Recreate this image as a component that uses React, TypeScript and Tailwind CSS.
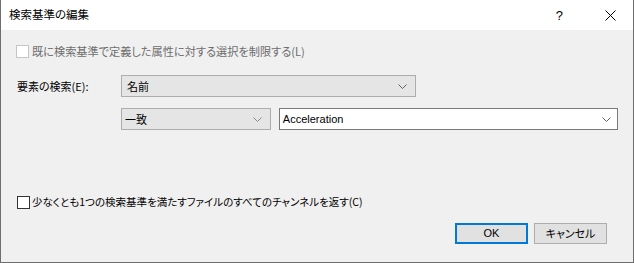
function Chevron({ color = "#606060" }: { color?: string }) {
  return (
    <svg width="9" height="5" viewBox="0 0 9 5" className="shrink-0">
      <polyline points="0.5,0.5 4.5,4.5 8.5,0.5" fill="none" stroke={color} strokeWidth="1" />
    </svg>
  );
}

function Checkbox({ disabled = false }: { disabled?: boolean }) {
  return (
    <div
      className={`h-[13px] w-[13px] shrink-0 border bg-white ${
        disabled ? "border-[#c6c6c6]" : "border-[#333333]"
      }`}
    />
  );
}

export default function App() {
  return (
    <div className="flex h-[263px] w-[634px] flex-col border-x border-b border-[#6e6e6e] bg-[#f0f0f0] font-['Noto_Sans_CJK_JP',sans-serif] text-[11px] text-black [font-feature-settings:'palt']">
      {/* title bar */}
      <div className="flex h-[30px] shrink-0 items-center bg-white pl-[8px]">
        <span className="text-[11.5px] leading-none">検索基準の編集</span>
        <span className="ml-auto mr-[42px] font-['Liberation_Sans',sans-serif] text-[13px] leading-none">?</span>
        <svg width="11" height="11" viewBox="0 0 11 11" className="mr-[17px]">
          <path d="M0.5 0.5 L10.5 10.5 M10.5 0.5 L0.5 10.5" stroke="#000" strokeWidth="1" />
        </svg>
      </div>

      <div className="flex flex-1 flex-col px-[15px]">
        <div className="mt-[15px] flex items-center gap-[3px]">
          <Checkbox disabled />
          <span className="text-[11.2px] leading-none text-[#6d6d6d]">既に検索基準で定義した属性に対する選択を制限する(L)</span>
        </div>

        <div className="mt-[17px] flex items-center">
          <span className="w-[105px] pl-px leading-none">要素の検索(E):</span>
          <div className="flex h-[22px] w-[295px] items-center border border-[#adadad] bg-[#e5e5e5] pl-[5px] pr-[8px]">
            <span className="leading-none">名前</span>
            <span className="ml-auto">
              <Chevron />
            </span>
          </div>
        </div>

        <div className="mt-[11px] flex items-center pl-[105px]">
          <div className="flex h-[22px] w-[151px] items-center border border-[#adadad] bg-[#e5e5e5] pl-[3px] pr-[8px]">
            <span className="leading-none">一致</span>
            <span className="ml-auto">
              <Chevron color="#8a8a8a" />
            </span>
          </div>
          <div className="ml-[8px] flex h-[22px] w-[342px] items-center border border-[#7a7a7a] bg-white pl-[3px] pr-[6px]">
            <span className="font-['Liberation_Sans',sans-serif] text-[11px] leading-none">Acceleration</span>
            <span className="ml-auto">
              <Chevron />
            </span>
          </div>
        </div>

        <div className="mt-[66px] flex items-center gap-[2px] pl-px">
          <Checkbox />
          <span className="text-[10.5px] leading-none">少なくとも1つの検索基準を満たすファイルのすべてのチャンネルを返す(C)</span>
        </div>

        <div className="mt-[14px] flex justify-end gap-[6px] pr-[11px]">
          <button className="flex h-[21px] w-[73px] items-center justify-center border-2 border-[#0078d7] bg-[#e1e1e1] font-['Liberation_Sans',sans-serif] text-[11px] leading-none">
            OK
          </button>
          <button className="flex h-[21px] w-[73px] items-center justify-center border border-[#adadad] bg-[#e1e1e1] leading-none">
            キャンセル
          </button>
        </div>
      </div>
    </div>
  );
}
